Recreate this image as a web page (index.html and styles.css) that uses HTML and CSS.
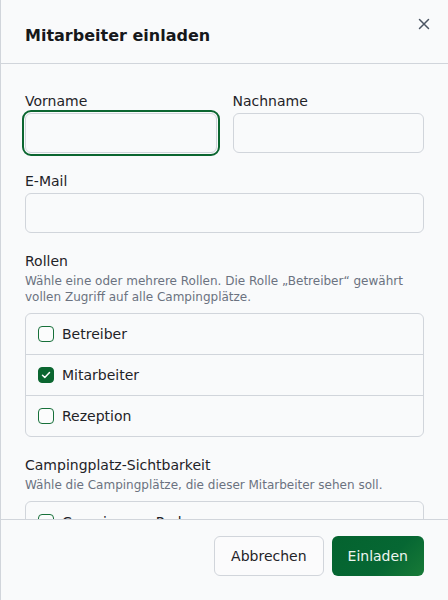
FILE: index.html
```html
<!DOCTYPE html>
<html lang="de">
<head>
<meta charset="utf-8">
<title>Mitarbeiter einladen</title>
<link rel="stylesheet" href="styles.css">
</head>
<body>
<div class="dialog">
  <header class="dialog-header">
    <h2 class="dialog-title">Mitarbeiter einladen</h2>
    <button class="close-btn" type="button" aria-label="Schließen">
      <svg width="16" height="16" viewBox="0 0 16 16" fill="none" stroke="currentColor" stroke-width="1.5" stroke-linecap="round">
        <path d="M3.5 3.5l9 9M12.5 3.5l-9 9"/>
      </svg>
    </button>
  </header>
  <div class="dialog-body">
    <div class="row-2">
      <div class="field">
        <label class="label">Vorname</label>
        <input class="input input-focus" type="text">
      </div>
      <div class="field">
        <label class="label">Nachname</label>
        <input class="input" type="text">
      </div>
    </div>
    <div class="field group">
      <label class="label">E-Mail</label>
      <input class="input" type="email">
    </div>
    <div class="group">
      <div class="label">Rollen</div>
      <p class="help">Wähle eine oder mehrere Rollen. Die Rolle „Betreiber“ gewährt vollen Zugriff auf alle Campingplätze.</p>
      <ul class="check-list">
        <li class="check-item"><span class="cbox"></span><span>Betreiber</span></li>
        <li class="check-item"><span class="cbox checked"><svg width="16" height="16" viewBox="0 0 16 16" fill="none" stroke="#fff" stroke-width="1.5" stroke-linecap="round" stroke-linejoin="round"><path d="M4.5 8.2l2.3 2.3 4.7-5"/></svg></span><span>Mitarbeiter</span></li>
        <li class="check-item"><span class="cbox"></span><span>Rezeption</span></li>
      </ul>
    </div>
    <div class="group">
      <div class="label">Campingplatz-Sichtbarkeit</div>
      <p class="help">Wähle die Campingplätze, die dieser Mitarbeiter sehen soll.</p>
      <ul class="check-list">
        <li class="check-item"><span class="cbox"></span><span>Camping am Park</span></li>
        <li class="check-item"><span class="cbox"></span><span>Seeblick Camping</span></li>
      </ul>
    </div>
  </div>
  <footer class="dialog-footer">
    <button class="btn btn-secondary" type="button">Abbrechen</button>
    <button class="btn btn-primary" type="button">Einladen</button>
  </footer>
</div>
</body>
</html>
```
FILE: styles.css
```css
* { box-sizing: border-box; }
html, body {
  margin: 0;
  padding: 0;
  height: 100%;
}
body {
  font-family: "DejaVu Sans", Verdana, sans-serif;
  color: #1f2328;
  background: #f9fafb;
  overflow: hidden;
}
.dialog {
  height: 600px;
  display: flex;
  flex-direction: column;
  background: #f9fafb;
  border-left: 1px solid #d1d5db;
  position: relative;
}
.dialog-header {
  padding: 24px 24px 15px;
  border-bottom: 1px solid #d1d5db;
  flex: none;
}
.dialog-title {
  margin: 0;
  font-size: 16px;
  line-height: 24px;
  font-weight: 700;
  color: #16181b;
}
.close-btn {
  position: absolute;
  top: 16px;
  right: 16px;
  width: 16px;
  height: 16px;
  padding: 0;
  border: 0;
  background: none;
  color: #4b5563;
  display: flex;
}
.dialog-body {
  flex: 1;
  min-height: 0;
  overflow: hidden;
  padding: 27px 24px 24px;
}
.row-2 {
  display: grid;
  grid-template-columns: 1fr 1fr;
  gap: 16px;
}
.field {
  display: flex;
  flex-direction: column;
}
.group {
  margin-top: 18px;
}
.label {
  display: block;
  font-size: 14px;
  line-height: 20px;
  color: #1f2328;
  margin-bottom: 2px;
}
.input {
  height: 40px;
  width: 100%;
  border: 1px solid #d1d5db;
  border-radius: 6px;
  background: #f9fafb;
  font: inherit;
  font-size: 14px;
  padding: 0 12px;
}
.input-focus {
  outline: 2px solid #0b6630;
  outline-offset: 1px;
}
.help {
  margin: 1px 0 0;
  font-size: 12px;
  line-height: 16px;
  color: #6b7280;
}
.check-list {
  list-style: none;
  margin: 8px 0 0;
  padding: 0;
  border: 1px solid #d1d5db;
  border-radius: 6px;
}
.check-item {
  display: flex;
  align-items: center;
  gap: 8px;
  padding: 10px 12px;
  font-size: 14px;
  line-height: 20px;
  color: #1f2328;
}
.check-item + .check-item {
  border-top: 1px solid #d1d5db;
}
.cbox {
  width: 16px;
  height: 16px;
  border: 1px solid #17703a;
  border-radius: 4px;
  background: #fbfcfc;
  flex: none;
  display: flex;
}
.cbox.checked {
  background: #0b6630;
  border-color: #0b6630;
}
.cbox.checked svg {
  margin: -1px;
}
.dialog-footer {
  flex: none;
  display: flex;
  justify-content: flex-end;
  gap: 8px;
  padding: 16px 24px 24px;
  border-top: 1px solid #d1d5db;
  background: #f9fafb;
}
.btn {
  height: 40px;
  padding: 0 16px;
  border-radius: 6px;
  font: inherit;
  font-size: 14px;
  line-height: 20px;
}
.btn-secondary {
  background: #fbfbfc;
  border: 1px solid #d1d5db;
  color: #1f2328;
}
.btn-primary {
  border: 0;
  color: #eef5f0;
  background: linear-gradient(135deg, #04632f 0%, #066733 60%, #187a37 100%);
}
```
